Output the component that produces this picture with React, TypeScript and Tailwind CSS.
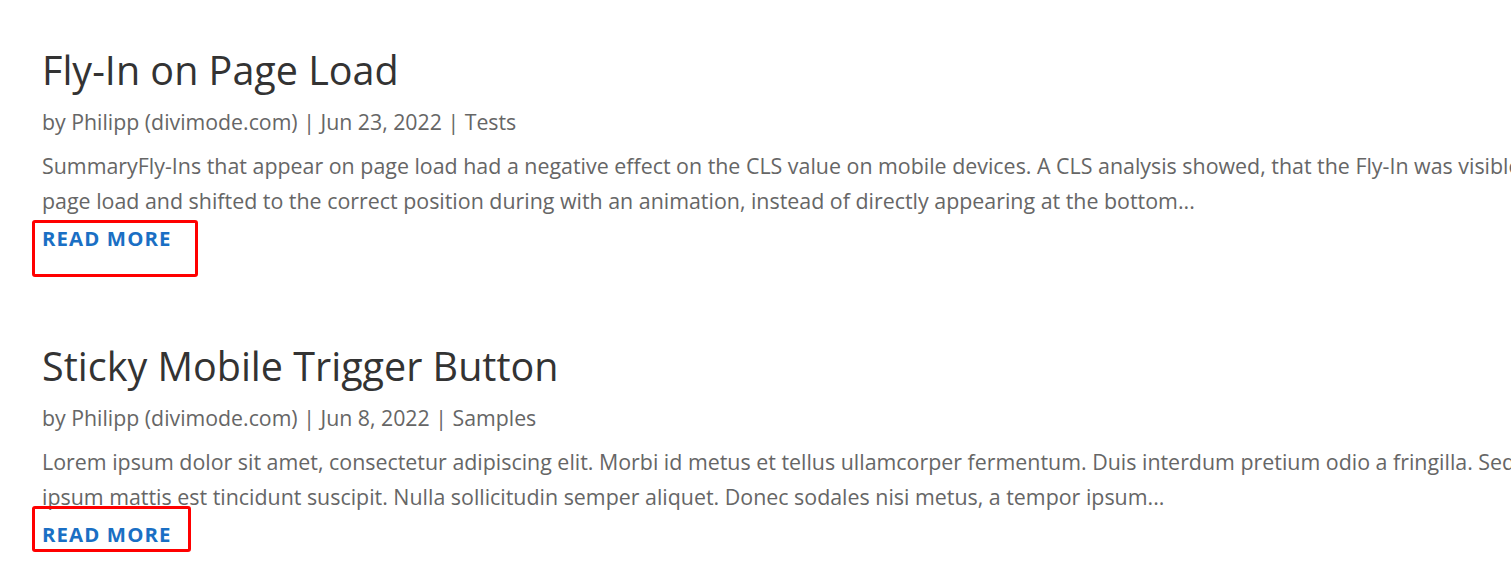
const posts = [
  {
    title: "Fly-In on Page Load",
    date: "Jun 23, 2022",
    category: "Tests",
    excerpt:
      "SummaryFly-Ins that appear on page load had a negative effect on the CLS value on mobile devices. A CLS analysis showed, that the Fly-In was visible on page load and shifted to the correct position during with an animation, instead of directly appearing at the bottom...",
    box: "-left-[10px] -top-[3px] w-[166px] h-[57px]",
  },
  {
    title: "Sticky Mobile Trigger Button",
    date: "Jun 8, 2022",
    category: "Samples",
    excerpt:
      "Lorem ipsum dolor sit amet, consectetur adipiscing elit. Morbi id metus et tellus ullamcorper fermentum. Duis interdum pretium odio a fringilla. Sed eget ipsum mattis est tincidunt suscipit. Nulla sollicitudin semper aliquet. Donec sodales nisi metus, a tempor ipsum...",
    box: "-left-[10px] -top-[13px] w-[159px] h-[46px]",
  },
];

export default function App() {
  return (
    <div
      className="h-[576px] w-[1511px] overflow-hidden bg-white"
      style={{ fontFamily: '"Open Sans", sans-serif' }}
    >
      <div className="w-[1585px] pl-[42px] pt-[46px]">
        {posts.map((post) => (
          <article key={post.title} className="mb-[89px]">
            <h2 className="pb-[13px] text-[39.5px] leading-[48px] text-[#333333]">
              {post.title}
            </h2>
            <p className="text-[21.3px] leading-[30px] text-[#666666]">
              by Philipp (divimode.com) | {post.date} | {post.category}
            </p>
            <p className="pt-[11px] text-[21.4px] leading-[35px] text-[#666666]">
              {post.excerpt}
            </p>
            <div className="relative mt-[5px] inline-block">
              <a
                href="#"
                className="block text-[20.4px] font-bold leading-[30px] tracking-[1.1px] text-[#1a6fc4]"
              >
                READ MORE
              </a>
              <div
                className={`pointer-events-none absolute rounded-[3px] border-[3px] border-[#ff0000] ${post.box}`}
              />
            </div>
          </article>
        ))}
      </div>
    </div>
  );
}
